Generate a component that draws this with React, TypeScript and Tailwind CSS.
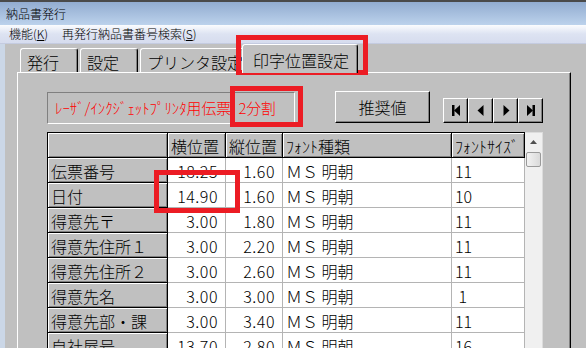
import React from "react";

const ROWS = [
  ["伝票番号", "18.25", "1.60", "11"],
  ["日付", "14.90", "1.60", "10"],
  ["得意先〒", "3.00", "1.80", "11"],
  ["得意先住所１", "3.00", "2.20", "11"],
  ["得意先住所２", "3.00", "2.60", "11"],
  ["得意先名", "3.00", "3.00", " 1"],
  ["得意先部・課", "3.00", "3.40", "11"],
  ["自社屋号", "13.70", "2.80", "16"],
];

const fixedCell =
  "h-[25px] bg-[#c0c0c0] border-r border-b border-black shadow-[inset_1px_1px_0_#fff,inset_-1px_-1px_0_#808080] flex items-center pl-[3px] pt-[2px] whitespace-nowrap overflow-hidden";
const dataCell =
  "h-[25px] bg-white border-r border-b border-[#b4b4b4] flex items-center pt-[2px] whitespace-pre overflow-hidden";
const raised =
  "bg-[#c0c0c0] border-t border-l border-white border-r border-b border-r-black border-b-black shadow-[inset_-1px_-1px_0_#808080]";

function Tab({ label, width, active }: { label: string; width: string; active?: boolean }) {
  if (active) {
    return (
      <div
        className={`${width} relative z-10 -ml-[4px] -mb-[1px] h-[29px] bg-[#c0c0c0] border-t border-l border-white border-r border-r-black shadow-[inset_-1px_0_0_#808080] rounded-t-[3px] flex items-center justify-center pt-[2px] pl-[2px] text-[16px]`}
      >
        {label}
      </div>
    );
  }
  return (
    <div
      className={`${width} h-[24px] bg-[#c0c0c0] border-t border-l border-white border-r border-r-black shadow-[inset_-1px_0_0_#808080] rounded-t-[3px] flex items-center pl-[6px] pt-[2px] text-[16px] whitespace-nowrap overflow-hidden`}
    >
      {label}
    </div>
  );
}

function NavButton({ kind }: { kind: "first" | "prev" | "next" | "last" }) {
  return (
    <div className={`${raised} w-[25px] h-[25px] flex items-center justify-center`}>
      <svg width="12" height="13" viewBox="0 0 12 13">
        {kind === "first" && (
          <>
            <rect x="2" y="1" width="2.5" height="11" fill="#000" />
            <polygon points="10,1 4,6.5 10,12" fill="#000" />
          </>
        )}
        {kind === "prev" && <polygon points="8.5,1 2.5,6.5 8.5,12" fill="#000" />}
        {kind === "next" && <polygon points="3.5,1 9.5,6.5 3.5,12" fill="#000" />}
        {kind === "last" && (
          <>
            <polygon points="2,1 8,6.5 2,12" fill="#000" />
            <rect x="7.5" y="1" width="2.5" height="11" fill="#000" />
          </>
        )}
      </svg>
    </div>
  );
}

export default function App() {
  return (
    <div className="relative w-[586px] h-[348px] overflow-hidden bg-[#c0c0c0] text-black font-light font-['Noto_Sans_CJK_JP',sans-serif]">
      {/* title bar */}
      <div className="h-[25px] border-t-2 border-[#4a4a4a] bg-gradient-to-b from-[#92acd0] to-[#bcd2ec] flex items-center pl-[6px] text-[12px]">
        納品書発行
      </div>
      {/* menu bar */}
      <div className="h-[19px] bg-gradient-to-b from-[#fbfcfe] via-[#dde3f2] to-[#d6dcee] border-b border-[#c4cbe0] flex items-center pl-[9px] gap-[14px] text-[12px]">
        <span>
          機能(<span className="underline">K</span>)
        </span>
        <span>
          再発行納品書番号検索(<span className="underline">S</span>)
        </span>
      </div>

      {/* body */}
      <div className="flex h-[304px]">
        <div className="w-[5px] bg-[#cbd7e7]" />
        <div className="pl-[12px] flex flex-col">
          {/* tabs */}
          <div className="h-[28px] flex items-end gap-[2px] pl-[3px]">
            <Tab label="発行" width="w-[58px]" />
            <Tab label="設定" width="w-[58px]" />
            <Tab label="プリンタ設定" width="w-[104px]" />
            <Tab label="印字位置設定" width="w-[116px]" active />
          </div>

          {/* panel */}
          <div className="w-[554px] h-[300px] border-t border-l border-white border-r border-r-black shadow-[inset_-1px_0_0_#808080] pl-[29px] pt-[19px]">
            <div className="flex items-start">
              <div className="w-[248px] h-[32px] border-t border-l border-[#808080] border-r border-b border-r-white border-b-white flex items-center pl-[7px] pt-[1px] text-[14.8px] text-[#ff0000] whitespace-nowrap">
                ﾚｰｻﾞ/ｲﾝｸｼﾞｪｯﾄﾌﾟﾘﾝﾀ用伝票{"\u2002"}2分割
              </div>
              <div className={`${raised} ml-[40px] -mt-[1px] w-[95px] h-[32px] flex items-center justify-center text-[16px]`}>
                推奨値
              </div>
              <div className="ml-[13px] mt-[6px] flex">
                <NavButton kind="first" />
                <NavButton kind="prev" />
                <NavButton kind="next" />
                <NavButton kind="last" />
              </div>
            </div>

            {/* grid */}
            <div className="mt-[8px] flex items-start">
              <div className="grid grid-cols-[120px_58px_57px_169px_73px] border-t border-l border-black text-[16px]">
                <div className={fixedCell} />
                <div className={fixedCell}>横位置</div>
                <div className={fixedCell}>縦位置</div>
                <div className={fixedCell}>ﾌｫﾝﾄ種類</div>
                <div className={fixedCell}>ﾌｫﾝﾄｻｲｽﾞ</div>
                {ROWS.map((r) => (
                  <React.Fragment key={r[0]}>
                    <div className={fixedCell}>{r[0]}</div>
                    <div className={`${dataCell} justify-end pr-[7px] tracking-[0.5px]`}>{r[1]}</div>
                    <div className={`${dataCell} justify-end pr-[7px] tracking-[0.5px]`}>{r[2]}</div>
                    <div className={`${dataCell} pl-[3px]`}>ＭＳ 明朝</div>
                    <div className={`${dataCell} pl-[3px]`}>{r[3]}</div>
                  </React.Fragment>
                ))}
              </div>
              {/* scrollbar */}
              <div className="w-[18px] h-[230px] bg-[#f0f0f0] border-t border-r border-[#dcdcdc] flex flex-col items-center">
                <div className="h-[18px] w-full flex items-center justify-center">
                  <svg width="7" height="4" viewBox="0 0 7 4">
                    <polygon points="0,4 3.5,0 7,4" fill="#505050" />
                  </svg>
                </div>
                <div className="mt-[1px] w-[15px] h-[15px] rounded-[2px] border border-[#9a9a9a] bg-gradient-to-r from-[#f2f2f2] to-[#dadada]" />
              </div>
            </div>
          </div>
        </div>
      </div>

      {/* red annotation boxes */}
      <div className="absolute left-[236px] top-[35px] w-[132px] h-[40px] border-[5px] border-[#ec1c24]" />
      <div className="absolute left-[230px] top-[86px] w-[73px] h-[41px] border-[5px] border-[#ec1c24]" />
      <div className="absolute left-[154px] top-[170px] w-[86px] h-[43px] border-[5px] border-[#ec1c24]" />
    </div>
  );
}
